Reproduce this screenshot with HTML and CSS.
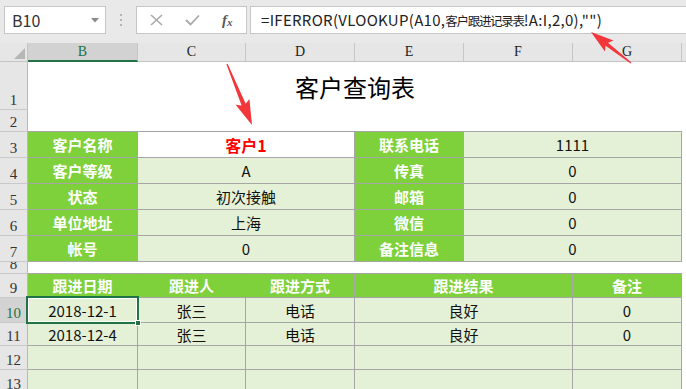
FILE: index.html
```html
<html>
  <head>
    <title>客户查询表</title>
    <meta charset="utf-8">
    <link rel="stylesheet" href="styles.css">
  </head>
  <body>
    <div class="toolbar">
      <div class="namebox">
        <span>B10</span>
        <svg width="8" height="5" viewBox="0 0 8 5"><path d="M0 0H8L4 4.5Z" fill="#8a8a8a"/></svg>
      </div>
      <div class="grip">
        <svg width="3" height="12" viewBox="0 0 3 12"><rect x="0" y="0" width="2" height="2" fill="#b5b5b5"/><rect x="0" y="5" width="2" height="2" fill="#b5b5b5"/><rect x="0" y="10" width="2" height="2" fill="#b5b5b5"/></svg>
      </div>
      <div class="fxbar">
        <svg class="ic-x" width="13" height="12" viewBox="0 0 13 12"><path d="M1 1L12 11M12 1L1 11" stroke="#a9a9a9" stroke-width="1.6" fill="none"/></svg>
        <svg class="ic-ok" width="15" height="12" viewBox="0 0 15 12"><path d="M1 6L5.5 10.5L14 1.5" stroke="#a9a9a9" stroke-width="1.8" fill="none"/></svg>
        <span class="fx">f<sub>x</sub></span>
      </div>
      <div class="formula">=IFERROR(VLOOKUP(A10,<span class="cjk">客户跟进记录表</span>!A:I,2,0),"")</div>
    </div>

    <div class="sheet">
      <div class="rowheads">
        <div class="corner">
          <svg width="11" height="11" viewBox="0 0 11 11"><path d="M11 0V11H0Z" fill="#b6b6b6"/></svg>
        </div>
        <div class="rh h48">1</div>
        <div class="rh h22">2</div>
        <div class="rh h26">3</div>
        <div class="rh h26">4</div>
        <div class="rh h26">5</div>
        <div class="rh h26">6</div>
        <div class="rh h26">7</div>
        <div class="rh h12">8</div>
        <div class="rh h24">9</div>
        <div class="rh h25 cur">10</div>
        <div class="rh h23">11</div>
        <div class="rh h24">12</div>
        <div class="rh h24">13</div>
      </div>

      <div class="main">
        <div class="colheads">
          <div class="ch w110 cur">B</div>
          <div class="ch w108">C</div>
          <div class="ch w109">D</div>
          <div class="ch w109">E</div>
          <div class="ch w109">F</div>
          <div class="ch w109">G</div>
          <div class="ch rest"></div>
        </div>

        <div class="title">客户查询表</div>
        <div class="blank2"></div>

        <div class="info">
          <div class="cell lab">客户名称</div>
          <div class="cell white red">客户1</div>
          <div class="cell lab">联系电话</div>
          <div class="cell">1111</div>

          <div class="cell lab">客户等级</div>
          <div class="cell">A</div>
          <div class="cell lab">传真</div>
          <div class="cell">0</div>

          <div class="cell lab">状态</div>
          <div class="cell">初次接触</div>
          <div class="cell lab">邮箱</div>
          <div class="cell">0</div>

          <div class="cell lab">单位地址</div>
          <div class="cell">上海</div>
          <div class="cell lab">微信</div>
          <div class="cell">0</div>

          <div class="cell lab">帐号</div>
          <div class="cell">0</div>
          <div class="cell lab">备注信息</div>
          <div class="cell">0</div>
        </div>

        <div class="blank8"></div>

        <div class="follow">
          <div class="cell lab">跟进日期</div>
          <div class="cell lab">跟进人</div>
          <div class="cell lab">跟进方式</div>
          <div class="cell lab">跟进结果</div>
          <div class="cell lab">备注</div>

          <div class="cell sel">2018-12-1<span class="handle"></span></div>
          <div class="cell">张三</div>
          <div class="cell">电话</div>
          <div class="cell">良好</div>
          <div class="cell">0</div>

          <div class="cell">2018-12-4</div>
          <div class="cell">张三</div>
          <div class="cell">电话</div>
          <div class="cell">良好</div>
          <div class="cell">0</div>

          <div class="cell"></div>
          <div class="cell"></div>
          <div class="cell"></div>
          <div class="cell"></div>
          <div class="cell"></div>

          <div class="cell"></div>
          <div class="cell"></div>
          <div class="cell"></div>
          <div class="cell"></div>
          <div class="cell"></div>
        </div>
      </div>
    </div>

    <!-- callout arrows drawn over the sheet -->
    <svg class="arrows" width="686" height="389" viewBox="0 0 686 389">
      <polygon points="227.6,63.8 245.7,103.8 249.4,99.1 252,125 235.6,104.7 241.6,105.5 226.4,64.2" fill="#f2363a"/>
      <polygon points="631.4,62.5 608,42.7 613.5,40.6 591,32 604.9,51.6 605.6,45.8 630.6,63.5" fill="#f2363a"/>
    </svg>
  </body>
</html>
```

FILE: styles.css
```css
* {
  box-sizing: border-box;
}
body {
  margin: 0;
  width: 686px;
  height: 389px;
  overflow: hidden;
  position: relative;
  background: #fff;
  font-family: "Noto Sans CJK SC", "Noto Sans", sans-serif;
}

/* formula bar */
.toolbar {
  height: 43px;
  background: #e9e9e9;
  display: flex;
  align-items: flex-start;
  padding: 6px 0 0 4px;
}
.namebox {
  width: 102px;
  height: 28px;
  background: #fff;
  border: 1px solid #c6c6c6;
  display: flex;
  align-items: center;
  justify-content: space-between;
  padding: 0 6px 0 7px;
  font-size: 16px;
  color: #333;
}
.grip {
  width: 30px;
  height: 28px;
  display: flex;
  align-items: center;
  justify-content: center;
}
.fxbar {
  width: 111px;
  height: 28px;
  background: #fff;
  border: 1px solid #c6c6c6;
  display: flex;
  align-items: center;
  padding-left: 13px;
}
.ic-ok {
  margin-left: 22px;
}
.fx {
  margin-left: 22px;
  font-family: "Liberation Serif", serif;
  font-style: italic;
  font-weight: bold;
  font-size: 15px;
  color: #5a5a5a;
}
.fx sub {
  font-size: 11px;
  vertical-align: -1px;
}
.formula {
  flex: 1;
  height: 28px;
  margin-left: 3px;
  background: #fff;
  border: 1px solid #c6c6c6;
  border-right: none;
  padding-left: 10px;
  font-size: 15px;
  letter-spacing: 0.3px;
  line-height: 26px;
  white-space: nowrap;
  color: #222;
}
.formula .cjk {
  font-size: 12.5px;
  letter-spacing: -1.3px;
}

/* sheet */
.sheet {
  display: flex;
}
.rowheads {
  width: 28px;
  flex: none;
  background: #e6e6e6;
}
.corner {
  height: 19px;
  border-right: 1px solid #c4c4c4;
  border-bottom: 1px solid #c4c4c4;
  display: flex;
  align-items: flex-end;
  justify-content: flex-end;
  padding: 0 2px 2px 0;
}
.rh {
  border-right: 1px solid #b9b9b9;
  border-bottom: 1px solid #c9c9c9;
  display: flex;
  align-items: flex-end;
  justify-content: center;
  overflow: hidden;
  font-family: "Liberation Serif", serif;
  font-size: 15px;
  line-height: 1;
  padding-bottom: 1px;
  color: #333;
}
.rh.cur {
  background: #d3d3d3;
  color: #217346;
}
.h48 { height: 48px; }
.h26 { height: 26px; }
.h25 { height: 25px; }
.h24 { height: 24px; }
.h23 { height: 23px; }
.h22 { height: 22px; }
.h12 { height: 12px; }

.main {
  flex: 1;
}
.colheads {
  display: flex;
  height: 19px;
  background: #e6e6e6;
}
.ch {
  border-right: 1px solid #c6c6c6;
  border-bottom: 1px solid #c4c4c4;
  text-align: center;
  font-family: "Liberation Serif", serif;
  font-size: 14px;
  line-height: 18px;
  color: #222;
}
.ch.cur {
  background: #d2d2d2;
  color: #217346;
  border-bottom: 2px solid #217346;
}
.w110 { width: 110px; }
.w109 { width: 109px; }
.w108 { width: 108px; }
.ch.rest {
  flex: 1;
  border-right: none;
}

.title {
  width: 654px;
  height: 48px;
  display: flex;
  align-items: center;
  justify-content: center;
  font-size: 24px;
  color: #000;
}
.blank2 {
  height: 21px;
}
.blank8 {
  height: 11px;
}

.info,
.follow {
  width: 654px;
  display: grid;
  gap: 1px;
  background: #a6a6a6;
}
.info {
  grid-template-columns: 109px 216px 108px 217px;
  grid-template-rows: repeat(5, 25px);
  padding: 1px 1px 1px 0;
}
.follow {
  grid-template-columns: 109px 107px 108px 217px 108px;
  grid-template-rows: 23px 24px 22px 23px 24px;
  padding: 1px 1px 0 0;
}

.cell {
  display: flex;
  align-items: center;
  justify-content: center;
  background: #e4f1d7;
  font-size: 15px;
  color: #111;
}
.cell.lab {
  background: #7ed13b;
  color: #fff;
  font-weight: bold;
}
.cell.white {
  background: #fff;
}
.cell.red {
  color: #ff0000;
  font-weight: bold;
  font-size: 16px;
}
.cell.sel {
  position: relative;
  outline: 2px solid #217346;
  box-shadow: inset 0 0 0 1px #fff;
}
.handle {
  position: absolute;
  right: -4px;
  bottom: -4px;
  width: 6px;
  height: 6px;
  background: #217346;
  border: 1px solid #fff;
}

.arrows {
  position: absolute;
  left: 0;
  top: 0;
  pointer-events: none;
}
```
